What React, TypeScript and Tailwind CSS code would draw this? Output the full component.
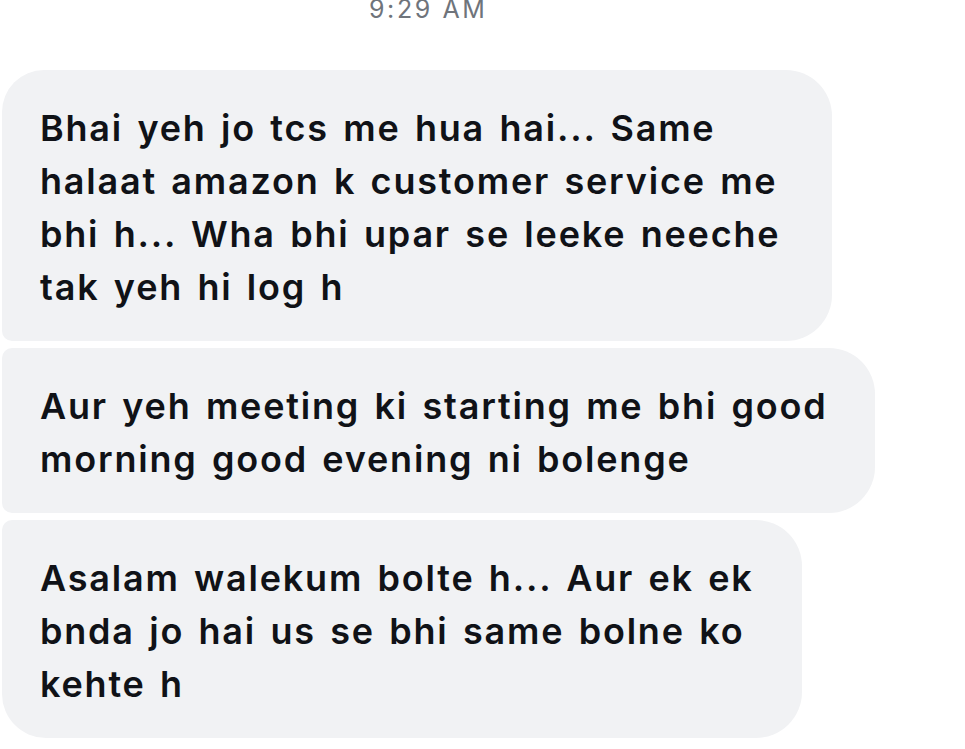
const messages = [
  {
    lines: [
      "Bhai yeh jo tcs me hua hai... Same",
      "halaat amazon k customer service me",
      "bhi h... Wha bhi upar se leeke neeche",
      "tak yeh hi log h",
    ],
    shape: "w-[830px] rounded-tl-[42px] rounded-bl-[10px]",
  },
  {
    lines: ["Aur yeh meeting ki starting me bhi good", "morning good evening ni bolenge"],
    shape: "w-[873px] rounded-tl-[10px] rounded-bl-[10px]",
  },
  {
    lines: [
      "Asalam walekum bolte h... Aur ek ek",
      "bnda jo hai us se bhi same bolne ko",
      "kehte h",
    ],
    shape: "w-[800px] rounded-tl-[10px] rounded-bl-[44px]",
  },
]

export default function App() {
  return (
    <div className="w-[965px] h-[749px] overflow-hidden bg-white font-['Inter',sans-serif]">
      <div className="-mt-[6px] h-[76px] pl-[369px] text-[25px] leading-[30px] tracking-[2.6px] text-[#6f747b]">
        9:29 AM
      </div>
      <div className="flex flex-col gap-[7px] pl-[2px]">
        {messages.map((m, i) => (
          <div
            key={i}
            className={`${m.shape} rounded-r-[46px] bg-[#f1f2f4] pl-[38px] pt-[32px] pb-[27px] text-[36px] leading-[53px] font-semibold tracking-[1.8px] [word-spacing:3.5px] text-[#101217]`}
          >
            {m.lines.map((line, j) => (
              <div key={j} className="whitespace-nowrap">
                {line}
              </div>
            ))}
          </div>
        ))}
      </div>
    </div>
  )
}
